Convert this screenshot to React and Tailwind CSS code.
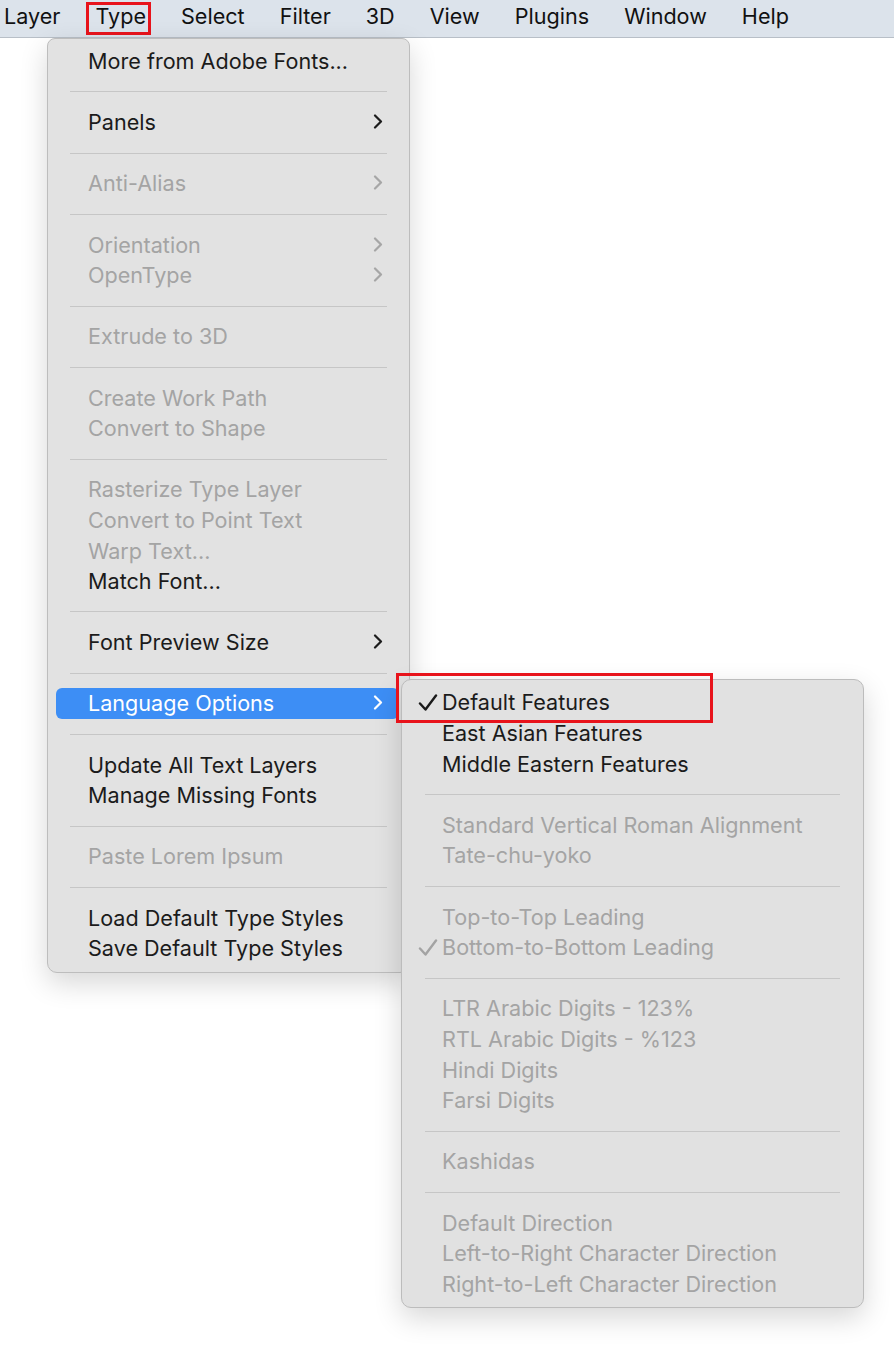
import React from 'react';

const font = { fontFamily: 'Inter, "Liberation Sans", sans-serif' };

function Chevron({ color }) {
    return (
        <svg width="10" height="15" viewBox="0 0 10 15" className="absolute right-[26px] top-[7px]">
            <path d="M2 1.5 L8 7.5 L2 13.5" fill="none" stroke={color} strokeWidth="2.2" strokeLinecap="round" strokeLinejoin="round" />
        </svg>
    );
}

function Check({ dim }) {
    return (
        <svg width="20" height="18" viewBox="0 0 20 18" className="absolute left-[16px] top-[7px]">
            <path d="M2 9.5 L7.5 15.5 L18 1.5" fill="none" stroke={dim ? '#a3a3a3' : '#1a1a1a'} strokeWidth="2.4" strokeLinecap="round" strokeLinejoin="round" />
        </svg>
    );
}

function Separator({ inset }) {
    return (
        <div className={'h-[30.6px] flex items-center ' + inset}>
            <div className="h-px w-full bg-[#c6c6c6]" />
        </div>
    );
}

// main Type menu
const mainItems = [
    { t: 'More from Adobe Fonts...' },
    'sep',
    { t: 'Panels', sub: true },
    'sep',
    { t: 'Anti-Alias', sub: true, off: true },
    'sep',
    { t: 'Orientation', sub: true, off: true },
    { t: 'OpenType', sub: true, off: true },
    'sep',
    { t: 'Extrude to 3D', off: true },
    'sep',
    { t: 'Create Work Path', off: true },
    { t: 'Convert to Shape', off: true },
    'sep',
    { t: 'Rasterize Type Layer', off: true },
    { t: 'Convert to Point Text', off: true },
    { t: 'Warp Text...', off: true },
    { t: 'Match Font...' },
    'sep',
    { t: 'Font Preview Size', sub: true },
    'sep',
    { t: 'Language Options', sub: true, active: true },
    'sep',
    { t: 'Update All Text Layers' },
    { t: 'Manage Missing Fonts' },
    'sep',
    { t: 'Paste Lorem Ipsum', off: true },
    'sep',
    { t: 'Load Default Type Styles' },
    { t: 'Save Default Type Styles' },
];

const subItems = [
    { t: 'Default Features', check: true, boxed: true },
    { t: 'East Asian Features' },
    { t: 'Middle Eastern Features' },
    'sep',
    { t: 'Standard Vertical Roman Alignment', off: true },
    { t: 'Tate-chu-yoko', off: true },
    'sep',
    { t: 'Top-to-Top Leading', off: true },
    { t: 'Bottom-to-Bottom Leading', off: true, check: true },
    'sep',
    { t: 'LTR Arabic Digits - 123%', off: true },
    { t: 'RTL Arabic Digits - %123', off: true },
    { t: 'Hindi Digits', off: true },
    { t: 'Farsi Digits', off: true },
    'sep',
    { t: 'Kashidas', off: true },
    'sep',
    { t: 'Default Direction', off: true },
    { t: 'Left-to-Right Character Direction', off: true },
    { t: 'Right-to-Left Character Direction', off: true },
];

function SubMenu() {
    return (
        <div className="absolute left-[353px] top-[-9px] w-[463px] rounded-[10px] border border-[#bcbcbc] bg-[#e1e1e1] pt-[7px] pb-[8px] shadow-[0_10px_28px_rgba(0,0,0,0.16)] z-20">
            {subItems.map((it, i) =>
                it === 'sep' ? (
                    <Separator key={i} inset="px-[23px]" />
                ) : (
                    <div key={i} className="relative h-[30.6px] leading-[30.6px] pl-[40px]">
                        {it.check && <Check dim={it.off} />}
                        <span className={it.off ? 'text-[#a4a4a4]' : 'text-[#1b1b1b]'}>{it.t}</span>
                        {it.boxed && (
                            <div className="absolute left-[-6px] top-[-14px] w-[317px] h-[50px] border-[3px] border-[#e8131b]" />
                        )}
                    </div>
                )
            )}
        </div>
    );
}

export default function App() {
    const bar = ['Layer', 'Type', 'Select', 'Filter', '3D', 'View', 'Plugins', 'Window', 'Help'];

    return (
        <div className="relative w-[894px] h-[1349px] bg-white overflow-hidden text-[21.6px]" style={font}>
            {/* menu bar */}
            <div className="h-[38px] bg-[#dce3eb] border-b border-[#b8bfc7] flex items-stretch pl-[4px] gap-[35px] text-[#111]">
                {bar.map((b) => (
                    <div key={b} className="relative flex items-center pb-[4px]">
                        {b}
                        {b === 'Type' && (
                            <span className="absolute left-[-9px] right-[-5px] top-[2px] bottom-[2px] border-[3px] border-[#e8131b]" />
                        )}
                    </div>
                ))}
            </div>

            {/* Type dropdown */}
            <div className="absolute left-[47px] top-[38px] w-[363px] rounded-b-[10px] rounded-t-[8px] border border-[#bdbdbd] bg-[#e2e2e2] pt-[7px] pb-[8px] shadow-[0_10px_28px_rgba(0,0,0,0.16)] z-10">
                {mainItems.map((it, i) =>
                    it === 'sep' ? (
                        <Separator key={i} inset="px-[22px]" />
                    ) : (
                        <div key={i} className="relative h-[30.6px]">
                            {it.active && (
                                <div className="absolute left-[8px] right-[10px] top-0 bottom-0 rounded-[6px] bg-[#3d8ef5]" />
                            )}
                            <div className={'relative leading-[30.6px] pl-[40px] ' + (it.active ? 'text-white' : it.off ? 'text-[#a4a4a4]' : 'text-[#1b1b1b]')}>
                                {it.t}
                            </div>
                            {it.sub && <Chevron color={it.active ? '#ffffff' : it.off ? '#a6a6a6' : '#1c1c1c'} />}
                            {it.active && <SubMenu />}
                        </div>
                    )
                )}
            </div>
        </div>
    );
}
